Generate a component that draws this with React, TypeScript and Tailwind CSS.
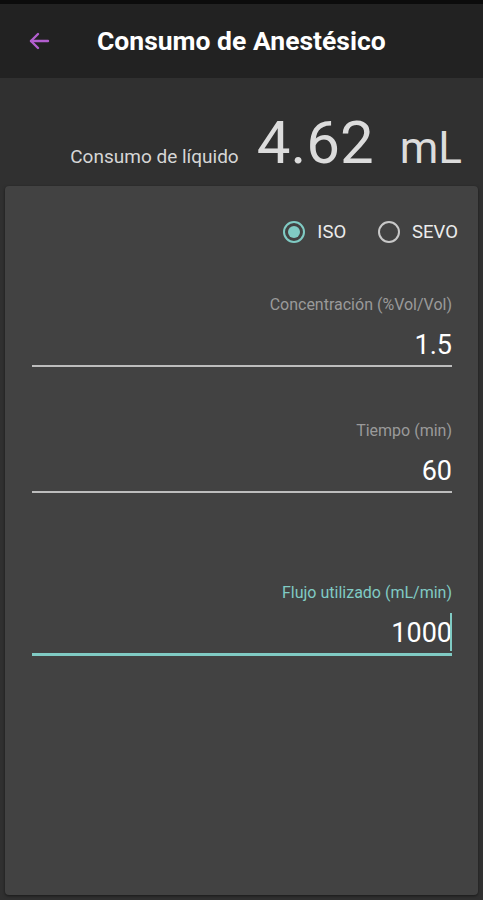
import { useState } from 'react';

function Radio({ label, checked, onClick }: { label: string; checked: boolean; onClick: () => void }) {
  return (
    <button onClick={onClick} className="flex items-center gap-[12px]">
      <span
        className={
          checked
            ? 'flex h-[22px] w-[22px] items-center justify-center rounded-full border-[2px] border-[#80cbc4]'
            : 'flex h-[22px] w-[22px] items-center justify-center rounded-full border-[2px] border-[#c8c8c8]'
        }
      >
        {checked && <span className="h-[12px] w-[12px] rounded-full bg-[#80cbc4]" />}
      </span>
      <span className="text-[18.5px] leading-[22px] text-[#ececec]">{label}</span>
    </button>
  );
}

export default function App() {
  const [agent, setAgent] = useState<'ISO' | 'SEVO'>('ISO');

  return (
    <div className="min-h-[900px] bg-[#303030] font-['Roboto',sans-serif] flex flex-col">
      {/* Toolbar */}
      <div className="h-[4px] bg-[#0c0c0c]" />
      <div className="h-[74px] bg-[#222222] flex items-center">
        <button className="ml-[26px] w-[26px] h-[26px] flex items-center justify-center">
          <svg width="24" height="24" viewBox="0 0 24 24" fill="none" stroke="#b35fcf" strokeWidth="2.4" strokeLinecap="round" strokeLinejoin="round">
            <path d="M21 12H4" />
            <path d="M11 5l-7 7 7 7" />
          </svg>
        </button>
        <h1 className="ml-[45px] text-[26.5px] font-bold text-white leading-none">Consumo de Anestésico</h1>
      </div>

      {/* Result */}
      <div className="flex items-baseline justify-end pr-[21px] pt-[30px] h-[108px]">
        <span className="text-[19px] text-[#d6d6d6] mr-[18px]">Consumo de líquido</span>
        <span className="text-[60px] leading-[70px] text-[#dcdcdc]">4.62</span>
        <span className="ml-[26px] text-[44px] text-[#dcdcdc]">mL</span>
      </div>

      {/* Form card */}
      <div className="mx-[5px] mb-[5px] h-[709px] rounded-[4px] bg-[#424242] shadow-[0_1px_3px_rgba(0,0,0,0.5)] pt-[35px] pl-[27px] pr-[26px]">
        <div className="flex justify-end gap-[32px] -mr-[6px]">
          <Radio label="ISO" checked={agent === 'ISO'} onClick={() => setAgent('ISO')} />
          <Radio label="SEVO" checked={agent === 'SEVO'} onClick={() => setAgent('SEVO')} />
        </div>

        <div className="mt-[53px] text-right text-[16px] leading-[18px] text-[#9a9a9a]">Concentración (%Vol/Vol)</div>
        <div className="mt-[15px] text-right text-[27px] leading-[32px] text-white">1.5</div>
        <div className="mt-[4px] h-[2px] bg-[#bdbdbd]" />

        <div className="mt-[55px] text-right text-[16px] leading-[18px] text-[#9a9a9a]">Tiempo (min)</div>
        <div className="mt-[15px] text-right text-[27px] leading-[32px] text-white">60</div>
        <div className="mt-[4px] h-[2px] bg-[#bdbdbd]" />

        <div className="mt-[91px] text-right text-[16px] leading-[18px] text-[#80cbc4]">Flujo utilizado (mL/min)</div>
        <div className="relative mt-[15px] text-right text-[27px] leading-[32px] text-white">
          1000
          <span className="absolute right-0 top-[-4px] w-[2px] h-[38px] bg-[#80cbc4]" />
        </div>
        <div className="mt-[4px] h-[3px] bg-[#80cbc4]" />
      </div>
    </div>
  );
}
